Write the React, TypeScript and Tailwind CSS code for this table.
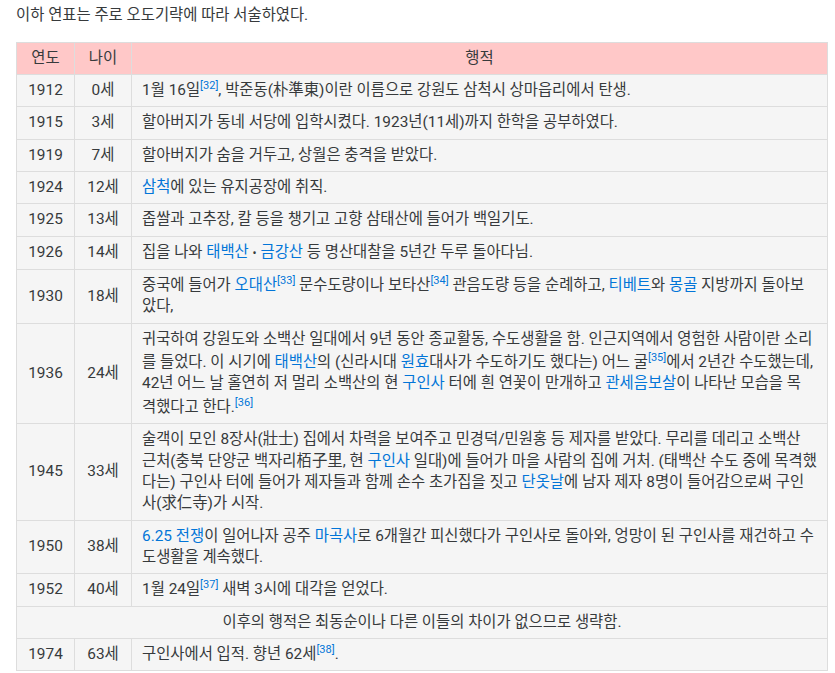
import React from "react";

const L = ({ children }: { children: React.ReactNode }) => (
  <a className="text-[#0275d8]">{children}</a>
);
const S = ({ n, tall, mid }: { n: number; tall?: boolean; mid?: boolean }) => (
  <sup
    className={
      "relative top-0 align-super text-[11px] text-[#0275d8] " +
      (tall ? "leading-[16px]" : mid ? "leading-[12px]" : "leading-none")
    }
  >
    [{n}]
  </sup>
);

type Row = { y: string; a: string; c: React.ReactNode };

const rows: Row[] = [
  { y: "1912", a: "0세", c: <>1월 16일<S n={32} />, 박준동(朴準東)이란 이름으로 강원도 삼척시 상마읍리에서 탄생.</> },
  { y: "1915", a: "3세", c: <>할아버지가 동네 서당에 입학시켰다. 1923년(11세)까지 한학을 공부하였다.</> },
  { y: "1919", a: "7세", c: <>할아버지가 숨을 거두고, 상월은 충격을 받았다.</> },
  { y: "1924", a: "12세", c: <><L>삼척</L>에 있는 유지공장에 취직.</> },
  { y: "1925", a: "13세", c: <>좁쌀과 고추장, 칼 등을 챙기고 고향 삼태산에 들어가 백일기도.</> },
  { y: "1926", a: "14세", c: <>집을 나와 <L>태백산</L> <span className="text-[12px]">•</span> <L>금강산</L> 등 명산대찰을 5년간 두루 돌아다님.</> },
  { y: "1930", a: "18세", c: <>중국에 들어가 <L>오대산</L><S n={33} mid /> 문수도량이나 보타산<S n={34} mid /> 관음도량 등을 순례하고, <L>티베트</L>와 <L>몽골</L> 지방까지 돌아보았다,</> },
  { y: "1936", a: "24세", c: <>귀국하여 강원도와 소백산 일대에서 9년 동안 종교활동, 수도생활을 함. 인근지역에서 영험한 사람이란 소리를 들었다. 이 시기에 <L>태백산</L>의 (신라시대 <L>원효</L>대사가 수도하기도 했다는) 어느 굴<S n={35} tall />에서 2년간 수도했는데, 42년 어느 날 홀연히 저 멀리 소백산의 현 <L>구인사</L> 터에 흰 연꽃이 만개하고 <L>관세음보살</L>이 나타난 모습을 목<br />격했다고 한다.<S n={36} tall /></> },
  { y: "1945", a: "33세", c: <>술객이 모인 8장사(壯士) 집에서 차력을 보여주고 민경덕/민원홍 등 제자를 받았다. 무리를 데리고 소백산 근처(충북 단양군 백자리栢子里, 현 <L>구인사</L> 일대)에 들어가 마을 사람의 집에 거처. (태백산 수도 중에 목격했다는) 구인사 터에 들어가 제자들과 함께 손수 초가집을 짓고 <L>단옷날</L>에 남자 제자 8명이 들어감으로써 구인사(求仁寺)가 시작.</> },
  { y: "1950", a: "38세", c: <><L>6.25 전쟁</L>이 일어나자 공주 <L>마곡사</L>로 6개월간 피신했다가 구인사로 돌아와, 엉망이 된 구인사를 재건하고 수도생활을 계속했다.</> },
  { y: "1952", a: "40세", c: <>1월 24일<S n={37} /> 새벽 3시에 대각을 얻었다.</> },
];

const td = "border border-[#dddddd] px-[10px] py-[5px]";

export default function App() {
  return (
    <div
      className="min-h-screen bg-white text-[15.4px] leading-[21.33px] text-[#373a3c]"
      style={{ fontFamily: 'Roboto, "Noto Sans CJK KR", sans-serif' }}
    >
      <div className="pl-4 pt-[5px]">
        <p className="mb-[15px] leading-[21.5px]">이하 연표는 주로 오도기략에 따라 서술하였다.</p>
        <table className="w-[812px] table-fixed border-collapse border border-[#dddddd]">
          <colgroup>
            <col className="w-[58px]" />
            <col className="w-[57px]" />
            <col />
          </colgroup>
          <thead>
            <tr className="bg-[#ffc8c8]">
              <th className={`${td} text-center font-normal`}>연도</th>
              <th className={`${td} text-center font-normal`}>나이</th>
              <th className={`${td} text-center font-normal`}>행적</th>
            </tr>
          </thead>
          <tbody className="bg-[#f5f5f5]">
            {rows.map((r) => (
              <tr key={r.y}>
                <td className={`${td} text-center`}>{r.y}</td>
                <td className={`${td} text-center`}>{r.a}</td>
                <td className={td}>{r.c}</td>
              </tr>
            ))}
            <tr>
              <td colSpan={3} className={`${td} text-center`}>
                이후의 행적은 최동순이나 다른 이들의 차이가 없으므로 생략함.
              </td>
            </tr>
            <tr>
              <td className={`${td} text-center`}>1974</td>
              <td className={`${td} text-center`}>63세</td>
              <td className={td}>
                구인사에서 입적. 향년 62세<S n={38} />.
              </td>
            </tr>
          </tbody>
        </table>
      </div>
    </div>
  );
}
